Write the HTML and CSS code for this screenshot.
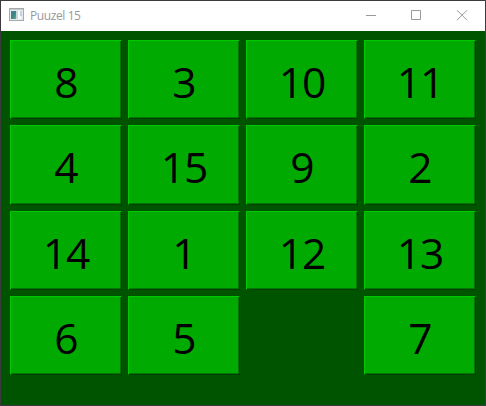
FILE: index.html
```
<!DOCTYPE html>
<html lang="en">
<head>
<meta charset="utf-8">
<title>Puuzel 15</title>
<link rel="stylesheet" href="styles.css">
</head>
<body>
<div class="window">
  <header class="titlebar">
    <svg class="app-icon" width="16" height="14" viewBox="0 0 16 14" shape-rendering="crispEdges">
      <defs><linearGradient id="pane" x2="1" y2="1"><stop stop-color="#4b7faf"/><stop offset=".5" stop-color="#388781"/><stop offset="1" stop-color="#67a68d"/></linearGradient></defs>
      <path fill="#a5a9ad" d="M0 0h15v13H0z"/>
      <path fill="#e9ebee" d="M1 1h13v11H1z"/>
      <path fill="#c5c9ce" d="M1 1h13v1H1z"/>
      <path fill="url(#pane)" d="M2 3h5v8H2z"/>
      <path fill="#c3dcda" d="M7 3h2v8H7z"/>
      <path fill="#fafafa" d="M9 3h3v8H9z"/>
      <path fill="#c6d2d9" d="M11 3h2v5h-2z"/>
    </svg>
    <span class="title">Puuzel 15</span>
    <div class="controls">
      <svg width="45" height="30" viewBox="0 0 45 30"><path d="M10 14.5h10"/></svg>
      <svg width="45" height="30" viewBox="0 0 45 30"><path d="M10.5 9.5h9v9h-9z"/></svg>
      <svg width="30" height="30" viewBox="0 0 30 30"><path d="M11 9.2l10 10M21 9.2l-10 10"/></svg>
    </div>
  </header>
  <main class="board">
    <div class="tile">8</div><div class="tile">3</div><div class="tile">10</div><div class="tile">11</div>
    <div class="tile">4</div><div class="tile">15</div><div class="tile">9</div><div class="tile">2</div>
    <div class="tile">14</div><div class="tile">1</div><div class="tile">12</div><div class="tile">13</div>
    <div class="tile">6</div><div class="tile">5</div><div class="gap"></div><div class="tile">7</div>
  </main>
</div>
</body>
</html>
```
FILE: styles.css
```
body {
  margin: 0;
  font-family: "Open Sans", "Noto Sans", sans-serif;
}
.window {
  box-sizing: border-box;
  width: 486px;
  height: 406px;
  border: 1px solid #3b3a3c;
  display: flex;
  flex-direction: column;
  background: #005400;
}
.titlebar {
  height: 30px;
  display: flex;
  align-items: center;
  padding-left: 8px;
  background: #fff;
}
.app-icon {
  display: block;
  margin-bottom: 2px;
}
.title {
  margin-left: 5px;
  font-size: 12px;
  line-height: 16px;
  letter-spacing: -0.4px;
  color: #999;
}
.controls {
  display: flex;
  margin-left: auto;
  width: 129px;
}
.controls svg {
  display: block;
  flex: none;
  fill: none;
  stroke: #999;
  stroke-width: 1;
}
.board {
  flex: 1;
  display: grid;
  grid-template-columns: repeat(4, 112px);
  grid-template-rows: 79px 80px 79px 79px;
  gap: 6px;
  align-content: start;
  padding: 9px;
}
.tile {
  display: flex;
  align-items: center;
  justify-content: center;
  box-sizing: border-box;
  padding-top: 4px;
  background: #00aa00;
  border: 1px solid;
  border-color: #00c800 #003f00 #003f00 #00c800;
  box-shadow: inset -1px -1px #007800;
  font-size: 42.5px;
  line-height: 60px;
  letter-spacing: -1px;
  color: #000;
}
```
